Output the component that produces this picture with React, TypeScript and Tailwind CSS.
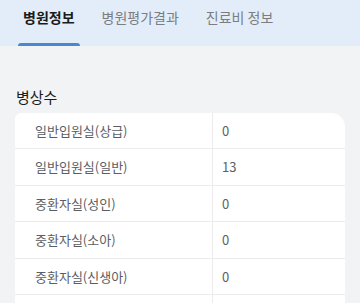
const tabs = ['병원정보', '병원평가결과', '진료비 정보']

const rows = [
  { label: '일반입원실(상급)', value: '0' },
  { label: '일반입원실(일반)', value: '13' },
  { label: '중환자실(성인)', value: '0' },
  { label: '중환자실(소아)', value: '0' },
  { label: '중환자실(신생아)', value: '0' },
  { label: '', value: '' },
]

const App = () => {
  return (
    <div
      className="w-[360px] h-[303px] overflow-hidden bg-[#f2f3f5]"
      style={{ fontFamily: '"Noto Sans CJK KR", "Noto Sans", sans-serif' }}
    >
      <div className="flex h-[46px] bg-[#e2edf9] pl-[18px] gap-[17px]">
        {tabs.map((tab, i) => (
          <div key={tab} className="relative flex h-full items-start px-[5px] pt-[7px]">
            <span
              className={
                i === 0
                  ? 'text-[14px] leading-[20px] font-bold text-[#1b1b1b]'
                  : 'text-[14px] leading-[20px] text-[#7a7d82]'
              }
            >
              {tab}
            </span>
            {i === 0 && (
              <div className="absolute bottom-0 left-0 right-0 h-[3px] rounded-t-full bg-[#4a86d2]" />
            )}
          </div>
        ))}
      </div>

      <div className="pt-[40px] px-[15px]">
        <h2 className="pl-px text-[15px] leading-[22px] font-normal text-[#1b1b1b]">병상수</h2>
        <div className="mt-[5px] bg-white rounded-tl-[6px] rounded-tr-[14px] overflow-hidden">
          {rows.map((row, i) => (
            <div key={i} className="flex h-[36.4px] border-b border-[#ececee]">
              <div className="w-[198px] flex items-center pl-[20px] border-r border-[#ececee] text-[13px] text-[#5b5e63]">
                {row.label}
              </div>
              <div className="flex-1 flex items-center pl-[9px] text-[13px] text-[#5b5e63]">
                {row.value}
              </div>
            </div>
          ))}
        </div>
      </div>
    </div>
  )
}

export default App
